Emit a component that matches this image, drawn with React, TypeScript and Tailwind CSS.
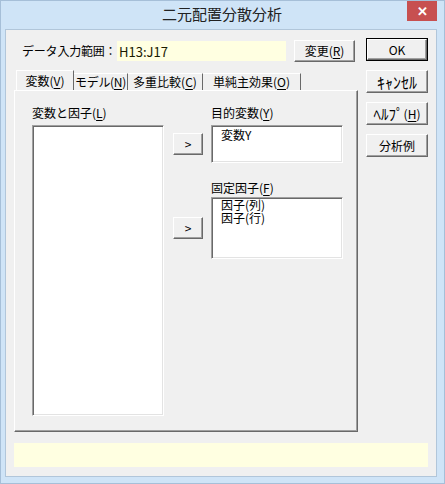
import React from "react";

const font = { fontFamily: '"Noto Sans CJK JP", "Noto Sans", sans-serif' };

const Btn: React.FC<{ children: React.ReactNode; className?: string }> = ({ children, className = "" }) => (
  <div
    className={`flex items-center justify-center whitespace-nowrap border border-t-white border-l-white border-r-[#696969] border-b-[#696969] bg-[#f0f0f0] text-[12px] leading-none text-black shadow-[inset_-1px_-1px_0_#a0a0a0] ${className}`}
  >
    {children}
  </div>
);

const Sunken: React.FC<{ children?: React.ReactNode; className?: string }> = ({ children, className = "" }) => (
  <div
    className={`border border-t-[#a0a0a0] border-l-[#a0a0a0] border-r-white border-b-white bg-white shadow-[inset_1px_1px_0_#696969,inset_-1px_-1px_0_#e3e3e3] ${className}`}
  >
    {children}
  </div>
);

const U: React.FC<{ children: React.ReactNode }> = ({ children }) => <span className="underline underline-offset-2">{children}</span>;

export default function App() {
  return (
    <div style={font} className="flex h-[484px] w-[445px] flex-col border border-[#a6bfd8] bg-[#cfe4f7] text-black">
      {/* タイトルバー */}
      <div className="flex h-[28px] items-start">
        <div className="flex-1 pl-[36px] pt-[4px] text-center text-[15px] leading-[18px] text-[#222]">二元配置分散分析</div>
        <div className="mr-[7px] flex h-[20px] w-[30px] items-center justify-center bg-[#c75050] text-[13px] font-bold text-white">
          ✕
        </div>
      </div>

      {/* クライアント */}
      <div className="ml-[4px] mr-[7px] flex flex-1 flex-col border border-[#b1c6da] bg-[#f0f0f0] px-[8px] pt-[8px]">
        <div className="flex gap-[8px]">
          {/* 左側 */}
          <div className="flex w-[344px] flex-col">
            <div className="mt-[2px] flex h-[22px] items-center pl-[8px]">
              <div className="w-[95px] whitespace-nowrap text-[12px] leading-none tracking-[-0.2px]">データ入力範囲：</div>
              <div className="flex h-[20px] w-[169px] items-center bg-[#ffffe1] pl-[2px] text-[13px] leading-none text-[#1a1a00]">
                H13:J17
              </div>
              <Btn className="ml-[8px] h-[22px] w-[61px]">
                変更(<U>R</U>)
              </Btn>
            </div>

            {/* タブ */}
            <div className="mt-[8px] flex h-[20px] items-end whitespace-nowrap pl-[2px]">
              <div className="flex h-[20px] w-[58px] items-center justify-center border-l border-t border-r border-l-white border-t-white border-r-[#696969] text-[12px] leading-none">
                変数(<U>V</U>)
              </div>
              <div className="flex h-[17px] w-[54px] items-center justify-center border-t border-r border-t-white border-r-[#696969] text-[12px] leading-none tracking-[-0.3px]">
                モデル(<U>N</U>)
              </div>
              <div className="flex h-[17px] w-[75px] items-center justify-center border-t border-r border-t-white border-r-[#696969] text-[12px] leading-none">
                多重比較(<U>C</U>)
              </div>
              <div className="flex h-[17px] w-[98px] items-center justify-center border-t border-r border-t-white border-r-[#696969] text-[12px] leading-none">
                単純主効果(<U>O</U>)
              </div>
            </div>

            {/* タブパネル */}
            <div className="flex h-[342px] border border-t-white border-l-white border-r-[#696969] border-b-[#696969] pl-[17px] shadow-[inset_-1px_-1px_0_#a0a0a0]">
              <div className="flex w-[132px] flex-col">
                <div className="mt-[15px] h-[14px] text-[12px] leading-[14px]">
                  変数と因子(<U>L</U>)
                </div>
                <Sunken className="mt-[5px] h-[291px]" />
              </div>

              <div className="ml-[9px] flex w-[30px] flex-col pt-[42px]">
                <Btn className="h-[22px] w-[30px] text-[#8a8a8a]">&gt;</Btn>
                <Btn className="mt-[62px] h-[22px] w-[30px] text-[#8a8a8a]">&gt;</Btn>
              </div>

              <div className="ml-[8px] flex w-[132px] flex-col">
                <div className="mt-[15px] h-[14px] text-[12px] leading-[14px]">
                  目的変数(<U>Y</U>)
                </div>
                <Sunken className="mt-[5px] h-[38px] pl-[9px] pt-[2px] text-[12px] leading-[13px]">
                  <div>変数Y</div>
                </Sunken>
                <div className="mt-[18px] h-[14px] text-[12px] leading-[14px]">
                  固定因子(<U>F</U>)
                </div>
                <Sunken className="mt-[2px] h-[62px] pl-[9px] text-[12px] leading-[13px]">
                  <div>因子(列)</div>
                  <div>因子(行)</div>
                </Sunken>
              </div>
            </div>
          </div>

          {/* 右側ボタン */}
          <div className="flex w-[62px] flex-col gap-[9px]">
            <div className="h-[23px] w-[62px] border border-black">
              <Btn className="h-full w-full">OK</Btn>
            </div>
            <Btn className="h-[23px] w-[62px] text-[16px]">ｷｬﾝｾﾙ</Btn>
            <Btn className="h-[23px] w-[62px]">
              <span className="text-[15px]">ﾍﾙﾌﾟ</span>(<U>H</U>)
            </Btn>
            <Btn className="h-[23px] w-[62px]">分析例</Btn>
          </div>
        </div>

        {/* ステータスバー */}
        <div className="mt-[11px] h-[24px] bg-[#ffffe1]" />
      </div>
      <div className="h-[6px]" />
    </div>
  );
}
